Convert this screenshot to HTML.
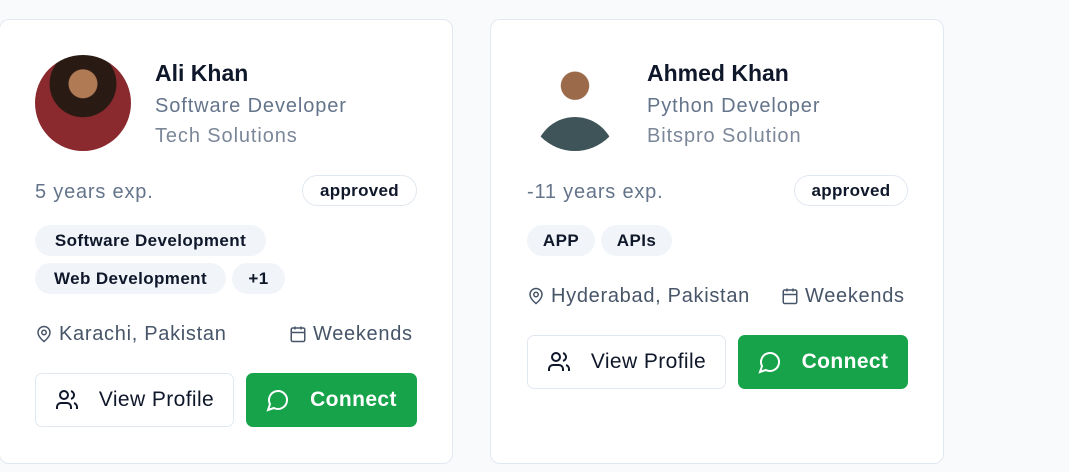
<!DOCTYPE html>
<html><head><meta charset="utf-8"><style>
*{box-sizing:border-box;margin:0;padding:0}
body{width:1069px;height:472px;background:#f8fafc;font-family:"Liberation Sans",sans-serif;position:relative;overflow:hidden}
.card{position:absolute;top:19px;width:454px;height:445px;background:#fff;border:1px solid #e2e8f0;border-radius:10px}
.a{position:absolute;white-space:nowrap}
.av{position:absolute;width:96px;height:96px;border-radius:50%;overflow:hidden}
.name{font-size:23px;font-weight:bold;color:#0f172a}
.t{font-size:20px;color:#64748b;letter-spacing:0.9px}
.g{font-size:20px;color:#64748b;letter-spacing:0.8px}
.badge{height:31px;border:1px solid #e2e8f0;border-radius:16px;font-size:17px;font-weight:bold;color:#0f172a;display:flex;align-items:center;justify-content:center;letter-spacing:0.3px}
.tag{height:31px;background:#f1f5f9;border-radius:16px;font-size:17px;font-weight:bold;color:#0f172a;display:flex;align-items:center;justify-content:center;letter-spacing:0.4px}
.btn{height:54px;border-radius:7px;font-size:21px;display:flex;align-items:center;justify-content:center;gap:20px;letter-spacing:0.4px}
.btn svg{display:block}
.vp{border:1px solid #e2e8f0;color:#0f172a;background:#fff}
.cn{background:#16a34a;color:#fff;font-weight:bold}
.loc{font-size:20px;color:#475569;display:flex;align-items:center;gap:6px;letter-spacing:0.7px;height:24px}
.loc svg{display:block}
</style></head><body>
<div class="card" style="left:-1px"></div>
<div class="card" style="left:490px"></div>

<div class="av" style="left:35px;top:55px;background:radial-gradient(circle at 50% 30%,#b07a55 0 17%,#2a1a14 18% 40%,#8a2a2e 41%)"></div>
<div class="a name" style="left:155px;top:60px">Ali Khan</div>
<div class="a t" style="left:155px;top:95px">Software Developer</div>
<div class="a t" style="left:155px;top:125px;color:#7b8799">Tech Solutions</div>
<div class="a g" style="left:35px;top:181px">5 years exp.</div>
<div class="a badge" style="left:302px;top:175px;width:115px">approved</div>
<div class="a tag" style="left:35px;top:225px;width:231px">Software Development</div>
<div class="a tag" style="left:35px;top:263px;width:191px">Web Development</div>
<div class="a tag" style="left:232px;top:263px;width:53px">+1</div>
<div class="a loc" style="left:35px;top:322px"><svg width="18" height="18" viewBox="0 0 24 24" fill="none" stroke="#475569" stroke-width="2"><path d="M20 10c0 6-8 12-8 12s-8-6-8-12a8 8 0 0 1 16 0z"/><circle cx="12" cy="10" r="3"/></svg>Karachi, Pakistan</div>
<div class="a loc" style="left:289px;top:322px"><svg width="18" height="18" viewBox="0 0 24 24" fill="none" stroke="#475569" stroke-width="2"><rect x="3" y="4" width="18" height="18" rx="2"/><path d="M16 2v4M8 2v4M3 10h18"/></svg>Weekends</div>
<div class="a btn vp" style="left:35px;top:373px;width:199px"><svg width="24" height="24" viewBox="0 0 24 24" fill="none" stroke="#0f172a" stroke-width="2"><path d="M16 21v-2a4 4 0 0 0-4-4H6a4 4 0 0 0-4 4v2"/><circle cx="9" cy="7" r="4"/><path d="M22 21v-2a4 4 0 0 0-3-3.87M16 3.13a4 4 0 0 1 0 7.75"/></svg>View Profile</div>
<div class="a btn cn" style="left:246px;top:373px;width:171px"><svg width="24" height="24" viewBox="0 0 24 24" fill="none" stroke="#fff" stroke-width="2"><path d="M7.9 20A9 9 0 1 0 4 16.1L2 22z"/></svg>Connect</div>

<div class="av" style="left:527px;top:55px;background:radial-gradient(circle at 50% 32%,#9a6a4a 0 17%,#fff 18%);"><div style="position:absolute;left:8px;top:62px;width:80px;height:40px;border-radius:40px 40px 0 0;background:#3f5458"></div></div>
<div class="a name" style="left:647px;top:60px">Ahmed Khan</div>
<div class="a t" style="left:647px;top:95px">Python Developer</div>
<div class="a t" style="left:647px;top:125px;color:#7b8799">Bitspro Solution</div>
<div class="a g" style="left:527px;top:181px">-11 years exp.</div>
<div class="a badge" style="left:794px;top:175px;width:114px">approved</div>
<div class="a tag" style="left:527px;top:225px;width:68px">APP</div>
<div class="a tag" style="left:601px;top:225px;width:71px">APIs</div>
<div class="a loc" style="left:527px;top:284px"><svg width="18" height="18" viewBox="0 0 24 24" fill="none" stroke="#475569" stroke-width="2"><path d="M20 10c0 6-8 12-8 12s-8-6-8-12a8 8 0 0 1 16 0z"/><circle cx="12" cy="10" r="3"/></svg>Hyderabad, Pakistan</div>
<div class="a loc" style="left:781px;top:284px"><svg width="18" height="18" viewBox="0 0 24 24" fill="none" stroke="#475569" stroke-width="2"><rect x="3" y="4" width="18" height="18" rx="2"/><path d="M16 2v4M8 2v4M3 10h18"/></svg>Weekends</div>
<div class="a btn vp" style="left:527px;top:335px;width:199px"><svg width="24" height="24" viewBox="0 0 24 24" fill="none" stroke="#0f172a" stroke-width="2"><path d="M16 21v-2a4 4 0 0 0-4-4H6a4 4 0 0 0-4 4v2"/><circle cx="9" cy="7" r="4"/><path d="M22 21v-2a4 4 0 0 0-3-3.87M16 3.13a4 4 0 0 1 0 7.75"/></svg>View Profile</div>
<div class="a btn cn" style="left:738px;top:335px;width:170px"><svg width="24" height="24" viewBox="0 0 24 24" fill="none" stroke="#fff" stroke-width="2"><path d="M7.9 20A9 9 0 1 0 4 16.1L2 22z"/></svg>Connect</div>
</body></html>
